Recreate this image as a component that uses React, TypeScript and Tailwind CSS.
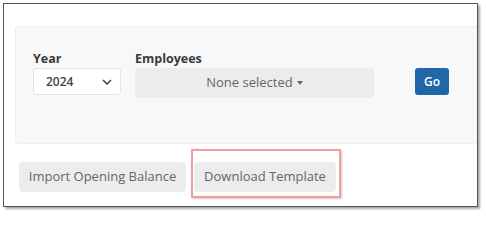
export default function App() {
  return (
    <div className="h-[215px] w-[486px] bg-white pl-[3px] pt-[3px] font-['Open_Sans',sans-serif]">
      <div className="h-[204px] w-[475px] border border-[#555] bg-white shadow-[2px_2px_2px_rgba(0,0,0,0.35)]">
        <div className="ml-[11px] mt-[22px] h-[118px] rounded-l-[4px] border-t border-l border-b border-[#eceef0] bg-[#f7f8f9] pl-[17px] pt-[24px]">
          <div className="flex items-start">
            <div className="flex flex-col">
              <label className="h-[16px] text-[12.5px] leading-[16px] font-bold text-[#3a3a3a]">Year</label>
              <div className="mt-[1px] flex h-[27px] w-[88px] items-center justify-between rounded-[3px] border border-[#e4e4e4] bg-white pl-[12px] pr-[8px]">
                <span className="text-[12px] font-semibold text-[#444]">2024</span>
                <svg width="10" height="6" viewBox="0 0 10 6" fill="none">
                  <path d="M1 1l4 4 4-4" stroke="#444" strokeWidth="1.5" />
                </svg>
              </div>
            </div>
            <div className="ml-[14px] flex flex-col">
              <label className="h-[16px] text-[12.5px] leading-[16px] font-bold text-[#3a3a3a]">Employees</label>
              <button className="mt-[1px] flex h-[30px] w-[239px] items-center justify-center rounded-[4px] bg-[#ececec] text-[13px] text-[#666]">
                None selected
                <span className="ml-[4px] inline-block h-0 w-0 border-x-[3px] border-t-[4px] border-x-transparent border-t-[#666]" />
              </button>
            </div>
            <button className="ml-[41px] mt-[17px] h-[27px] w-[34px] rounded-[3px] bg-[#2167a8] text-[12px] font-semibold text-white">
              Go
            </button>
          </div>
        </div>
        <div className="ml-[15px] mt-[18px] flex items-center gap-[8px]">
          <button className="h-[30px] w-[167px] rounded-[4px] bg-[#ececec] text-[13px] text-[#666]">
            Import Opening Balance
          </button>
          <div className="relative">
            <button className="h-[30px] w-[142px] rounded-[4px] bg-[#ececec] text-[13px] text-[#666]">
              Download Template
            </button>
            <div className="absolute top-[-13px] left-[-3px] h-[49px] w-[150px] border-2 border-[#f29c9c] shadow-[1px_1px_2px_rgba(0,0,0,0.2)]" />
          </div>
        </div>
      </div>
    </div>
  );
}
